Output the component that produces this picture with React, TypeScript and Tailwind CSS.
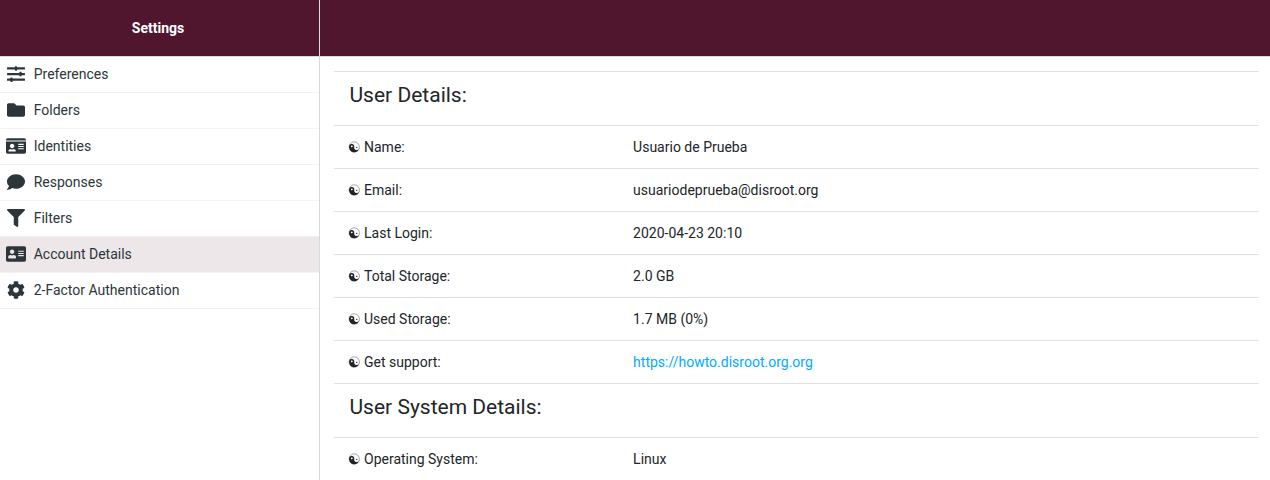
import { FaSlidersH, FaFolder, FaAddressCard, FaComment, FaFilter, FaCog, FaIdCard } from "react-icons/fa";

const nav = [
  { label: "Preferences", icon: FaSlidersH, size: 18 },
  { label: "Folders", icon: FaFolder, size: 18 },
  { label: "Identities", icon: FaIdCard, size: 20 },
  { label: "Responses", icon: FaComment, size: 18 },
  { label: "Filters", icon: FaFilter, size: 18 },
  { label: "Account Details", icon: FaAddressCard, size: 20, active: true },
  { label: "2-Factor Authentication", icon: FaCog, size: 18 },
];

const details = [
  ["Name:", "Usuario de Prueba"],
  ["Email:", "usuariodeprueba@disroot.org"],
  ["Last Login:", "2020-04-23 20:10"],
  ["Total Storage:", "2.0 GB"],
  ["Used Storage:", "1.7 MB (0%)"],
  ["Get support:", "https://howto.disroot.org.org"],
];

function YinYang() {
  return (
    <svg width="12" height="12" viewBox="0 0 24 24" className="mr-1 shrink-0">
      <circle cx="12.5" cy="12" r="10.3" fill="white" stroke="#212529" strokeWidth="0.8" />
      <g transform="translate(0.5 0) rotate(8 12 12)">
        <path d="M1.5 12a10.5 10.5 0 0 0 21 0a5.25 5.25 0 0 1-10.5 0a5.25 5.25 0 0 0-10.5 0Z" fill="#212529" />
        <circle cx="7" cy="11.5" r="1.9" fill="white" />
        <circle cx="17" cy="12" r="1.4" fill="#212529" />
      </g>
    </svg>
  );
}

function Row({ label, value }: { label: string; value: string }) {
  const link = value.startsWith("https");
  return (
    <div className="flex h-[43px] items-center border-t border-[#dee2e6] pl-[14px]">
      <div className="flex w-[285.1px] shrink-0 items-center"><YinYang />{label}</div>
      {link ? <a className="text-[#00acff]">{value}</a> : <div>{value}</div>}
    </div>
  );
}

function Title({ text }: { text: string }) {
  return <h2 className="h-[54px] border-t border-[#dee2e6] pl-[15.5px] pt-[7px] text-[21px] leading-[32px]">{text}</h2>;
}

export default function App() {
  return (
    <div className="flex h-[480px] overflow-hidden bg-white font-['Roboto','DejaVu_Sans',sans-serif] text-[14px] text-[#212529]">
      <aside className="w-80 shrink-0 border-r border-[#d4dbde]">
        <div className="flex h-[57px] items-center justify-center border-b border-[#d4dbde] bg-[#4f162d] pr-[3px] font-bold text-white">Settings</div>
        <nav>
          {nav.map(({ label, icon: Icon, size, active }) => (
            <div key={label} className={`flex h-9 items-center border-b border-[#f1f3f4] pl-1.5 text-[#2c363a] ${active ? "bg-[#ede7ea]" : ""}`}>
              <span className="mr-[7.7px] flex w-5 shrink-0 justify-center pb-px"><Icon size={size} /></span>
              {label}
            </div>
          ))}
        </nav>
      </aside>
      <main className="min-w-0 grow">
        <div className="h-[57px] border-b border-[#d4dbde] bg-[#4f162d]" />
        <div className="ml-[14px] mr-[11px] pt-[14px]">
          <Title text="User Details:" />
          {details.map(([l, v]) => <Row key={l} label={l} value={v} />)}
          <Title text="User System Details:" />
          <Row label="Operating System:" value="Linux" />
        </div>
      </main>
    </div>
  );
}
